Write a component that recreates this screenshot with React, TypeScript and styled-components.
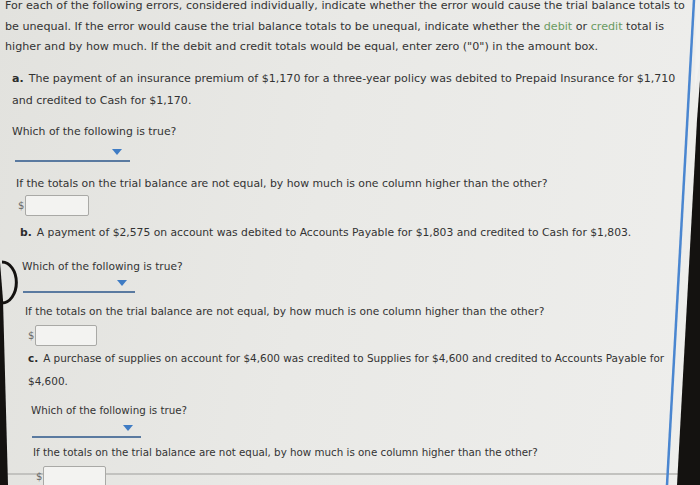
import React from "react";
import styled, { createGlobalStyle } from "styled-components";

const Global = createGlobalStyle`
  html, body { margin: 0; padding: 0; background: #1a1816; }
  #root { width: 700px; height: 485px; }
`;

const Page = styled.div`
  position: relative;
  width: 700px;
  height: 485px;
  overflow: hidden;
  background: linear-gradient(100deg, #e2e2de 0%, #e9e9e6 45%, #eeeeec 100%);
  font-family: "DejaVu Sans", Verdana, sans-serif;
  color: #333333;
`;

const Panel = styled.div`
  height: 479px;
  border-bottom: 2px solid #c2c2bf;
  box-sizing: border-box;
`;

const Section = styled.div<{ $size: number }>`
  font-size: ${(p) => p.$size}px;
`;

const Para = styled.div<{ $indent: number; $lh: number; $top: number }>`
  margin-top: ${(p) => p.$top}px;
  padding-left: ${(p) => p.$indent}px;
  line-height: ${(p) => p.$lh}px;
  white-space: nowrap;
`;

const Letter = styled.b`
  margin-right: 5px;
  color: #2c2c2c;
`;

const Accent = styled.span`
  color: #6a9a62;
`;

const Dropdown = styled.div<{ $indent: number; $width: number; $top: number }>`
  margin-top: ${(p) => p.$top}px;
  margin-left: ${(p) => p.$indent}px;
  width: ${(p) => p.$width}px;
  height: 20px;
  border-bottom: 2px solid #5a7aa0;
  box-sizing: border-box;
  display: flex;
  justify-content: flex-end;
  align-items: flex-start;
  padding: 7px 8px 0 0;
`;

const Caret = styled.div`
  width: 0;
  height: 0;
  border-left: 5px solid transparent;
  border-right: 5px solid transparent;
  border-top: 6px solid #3f7cc4;
`;

const AmountRow = styled.div<{ $indent: number; $top: number; $width: number }>`
  position: relative;
  margin-top: ${(p) => p.$top}px;
  padding-left: ${(p) => p.$indent}px;
  display: flex;
  align-items: center;
  gap: 1px;
  & > div { width: ${(p) => p.$width}px; }
`;

const Dollar = styled.span`
  color: #6a6a6a;
  font-size: 10px;
`;

const Box = styled.div`
  height: 21px;
  box-sizing: border-box;
  border: 1px solid #a9a9a6;
  border-radius: 2px;
  background: #f3f3f1;
`;

const Frame = styled.svg`
  position: absolute;
  inset: 0;
  pointer-events: none;
`;

type Q = {
  letter: string;
  lines: React.ReactNode[];
  qSize: number;
  size: number;
  letterIndent: number;
  lh: number;
  topQ: number;
  whichIndent: number;
  whichTop: number;
  ddIndent: number;
  ddWidth: number;
  ddTop: number;
  ifIndent: number;
  ifTop: number;
  amtIndent: number;
  amtTop: number;
  boxWidth: number;
};

const questions: Q[] = [
  {
    letter: "a.",
    lines: [
      "The payment of an insurance premium of $1,170 for a three-year policy was debited to Prepaid Insurance for $1,710",
      "and credited to Cash for $1,170.",
    ],
    qSize: 11.05, size: 10.85,
    letterIndent: 12, lh: 22, topQ: 10,
    whichIndent: 12, whichTop: 10,
    ddIndent: 15, ddWidth: 115, ddTop: 0,
    ifIndent: 16, ifTop: 12,
    amtIndent: 18, amtTop: 1, boxWidth: 64,
  },
  {
    letter: "b.",
    lines: [
      "A payment of $2,575 on account was debited to Accounts Payable for $1,803 and credited to Cash for $1,803.",
    ],
    qSize: 10.75, size: 10.6,
    letterIndent: 20, lh: 20, topQ: 7,
    whichIndent: 22, whichTop: 13,
    ddIndent: 23, ddWidth: 112, ddTop: -3,
    ifIndent: 25, ifTop: 8,
    amtIndent: 28, amtTop: 4, boxWidth: 62,
  },
  {
    letter: "c.",
    lines: [
      "A purchase of supplies on account for $4,600 was credited to Supplies for $4,600 and credited to Accounts Payable for",
      "$4,600.",
    ],
    qSize: 10.45, size: 10.3,
    letterIndent: 28, lh: 23, topQ: 1,
    whichIndent: 31, whichTop: 7,
    ddIndent: 32, ddWidth: 109, ddTop: -2,
    ifIndent: 33, ifTop: 4,
    amtIndent: 36, amtTop: 4, boxWidth: 63,
  },
];

function Question({ q }: { q: Q }) {
  return (
    <Section $size={q.size}>
      <Section $size={q.qSize}>
        <Para $indent={q.letterIndent} $lh={q.lh} $top={q.topQ}>
          {q.lines.map((l, i) => (
            <div key={i}>
              {i === 0 && <Letter>{q.letter}</Letter>}
              {l}
            </div>
          ))}
        </Para>
      </Section>
      <Para $indent={q.whichIndent} $lh={20} $top={q.whichTop}>
        Which of the following is true?
      </Para>
      <Dropdown $indent={q.ddIndent} $width={q.ddWidth} $top={q.ddTop}>
        <Caret />
      </Dropdown>
      <Para $indent={q.ifIndent} $lh={20} $top={q.ifTop}>
        If the totals on the trial balance are not equal, by how much is one column higher than the other?
      </Para>
      <AmountRow $indent={q.amtIndent} $top={q.amtTop} $width={q.boxWidth}>
        <Dollar>$</Dollar>
        <Box />
      </AmountRow>
    </Section>
  );
}

export default function App() {
  return (
    <>
      <Global />
      <Page>
        <Panel>
          <Section $size={11.15}>
            <Para $indent={5} $lh={20.5} $top={-4}>
              <div>
                For each of the following errors, considered individually, indicate whether the error would cause the trial balance totals to
              </div>
              <div>
                be unequal. If the error would cause the trial balance totals to be unequal, indicate whether the <Accent>debit</Accent> or <Accent>credit</Accent> total is
              </div>
              <div>
                higher and by how much. If the debit and credit totals would be equal, enter zero ("0") in the amount box.
              </div>
            </Para>
          </Section>
          {questions.map((q) => (
            <Question key={q.letter} q={q} />
          ))}
        </Panel>
        <Frame width="700" height="485" viewBox="0 0 700 485">
          <polygon points="700,80 700,485 677,485 697,120" fill="#141210" />
          <polygon points="696,0 700,0 700,60 695,90" fill="#f2f2f0" />
          <line x1="694" y1="0" x2="667" y2="485" stroke="#4a86d0" strokeWidth="2.5" />
          <polygon points="0,262 0,485 8,485 3,300" fill="#141210" />
          <path d="M 2 262 A 14 20 0 0 1 2 303" fill="none" stroke="#141210" strokeWidth="3" />
        </Frame>
      </Page>
    </>
  );
}
